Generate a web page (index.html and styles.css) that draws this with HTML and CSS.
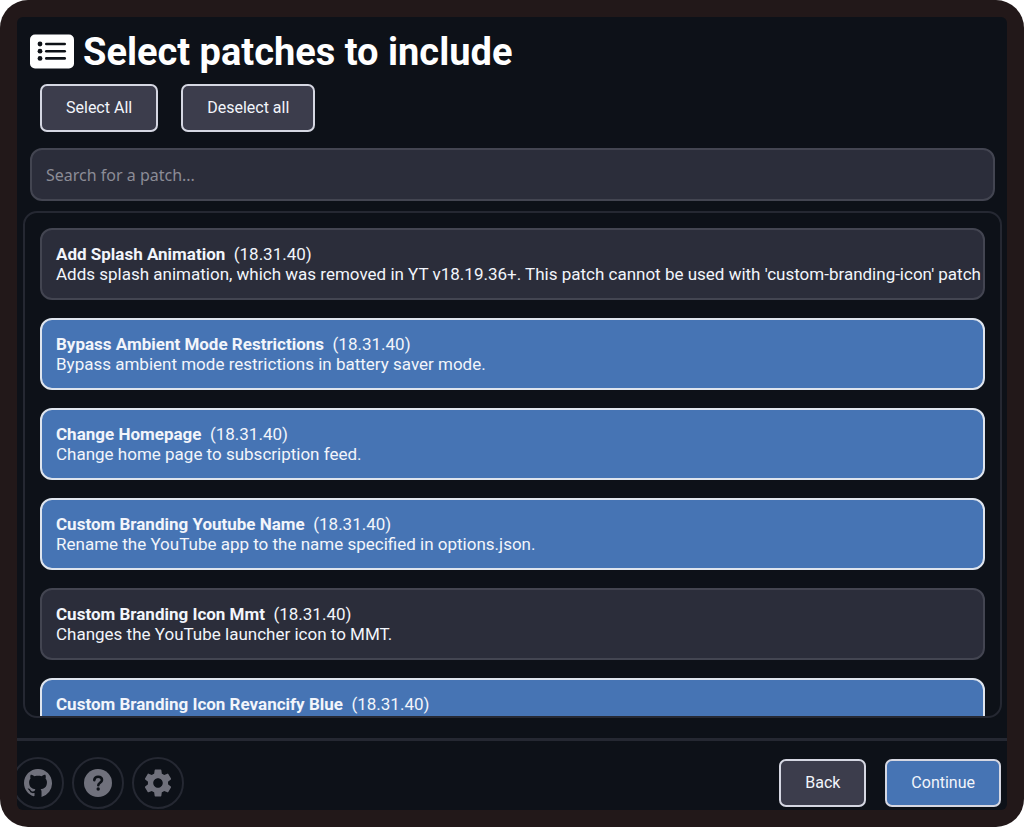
FILE: index.html
```html
<!DOCTYPE html>
<html lang="en">
  <head>
    <meta charset="utf-8">
    <title>Select patches</title>
    <link rel="stylesheet" href="styles.css">
  </head>
  <body>
    <div class="window">
      <div class="screen">
        <main class="content">
          <h1 class="title">
            <svg class="title-icon" viewBox="0 0 44 36" aria-hidden="true">
              <rect x="0" y="0.5" width="44" height="34" rx="5" fill="#fff"/>
              <g fill="#0d1117">
                <circle cx="10" cy="10" r="2.4"/>
                <circle cx="10" cy="17.2" r="2.4"/>
                <circle cx="10" cy="24.4" r="2.4"/>
                <rect x="15" y="8.7" width="21" height="2.6" rx="1.3"/>
                <rect x="15" y="15.9" width="21" height="2.6" rx="1.3"/>
                <rect x="15" y="23.1" width="21" height="2.6" rx="1.3"/>
              </g>
            </svg>
            Select patches to include
          </h1>

          <div class="select-buttons">
            <button type="button">Select All</button>
            <button type="button">Deselect all</button>
          </div>

          <input class="search" type="search" placeholder="Search for a patch..." aria-label="Search for a patch">

          <ul class="patch-list">
            <li>
              <input class="select" type="checkbox" id="patch-0">
              <label class="patch" for="patch-0">
                <span><strong>Add Splash Animation</strong>&nbsp; (18.31.40)</span>
                <span>Adds splash animation, which was removed in YT v18.19.36+. This patch cannot be used with 'custom-branding-icon' patch</span>
              </label>
            </li>
            <li>
              <input class="select" type="checkbox" id="patch-1" checked>
              <label class="patch" for="patch-1">
                <span><strong>Bypass Ambient Mode Restrictions</strong>&nbsp; (18.31.40)</span>
                <span>Bypass ambient mode restrictions in battery saver mode.</span>
              </label>
            </li>
            <li>
              <input class="select" type="checkbox" id="patch-2" checked>
              <label class="patch" for="patch-2">
                <span><strong>Change Homepage</strong>&nbsp; (18.31.40)</span>
                <span>Change home page to subscription feed.</span>
              </label>
            </li>
            <li>
              <input class="select" type="checkbox" id="patch-3" checked>
              <label class="patch" for="patch-3">
                <span><strong>Custom Branding Youtube Name</strong>&nbsp; (18.31.40)</span>
                <span>Rename the YouTube app to the name specified in options.json.</span>
              </label>
            </li>
            <li>
              <input class="select" type="checkbox" id="patch-4">
              <label class="patch" for="patch-4">
                <span><strong>Custom Branding Icon Mmt</strong>&nbsp; (18.31.40)</span>
                <span>Changes the YouTube launcher icon to MMT.</span>
              </label>
            </li>
            <li>
              <input class="select" type="checkbox" id="patch-5" checked>
              <label class="patch" for="patch-5">
                <span><strong>Custom Branding Icon Revancify Blue</strong>&nbsp; (18.31.40)</span>
              </label>
            </li>
          </ul>
        </main>

        <footer class="footer">
          <div class="links">
            <a class="round" href="#" aria-label="GitHub">
              <svg viewBox="0 0 16 16" fill="currentColor"><path d="M8 0C3.58 0 0 3.58 0 8c0 3.54 2.29 6.53 5.47 7.59.4.07.55-.17.55-.38 0-.19-.01-.82-.01-1.49-2.01.37-2.53-.49-2.69-.94-.09-.23-.48-.94-.82-1.13-.28-.15-.68-.52-.01-.53.63-.01 1.08.58 1.23.82.72 1.21 1.87.87 2.33.66.07-.52.28-.87.51-1.07-1.78-.2-3.64-.89-3.64-3.95 0-.87.31-1.59.82-2.15-.08-.2-.36-1.02.08-2.12 0 0 .67-.21 2.2.82.64-.18 1.32-.27 2-.27s1.36.09 2 .27c1.53-1.04 2.2-.82 2.2-.82.44 1.1.16 1.92.08 2.12.51.56.82 1.27.82 2.15 0 3.07-1.87 3.75-3.65 3.95.29.25.54.73.54 1.48V16A8.01 8.01 0 0 0 16 8c0-4.42-3.58-8-8-8z"/></svg>
            </a>
            <a class="round" href="#" aria-label="Help">
              <svg viewBox="0 0 28 28">
                <circle cx="14" cy="14" r="14" fill="currentColor"/>
                <path d="M10.3 11.2c.2-2.2 1.7-3.4 3.8-3.4 2.3 0 3.9 1.3 3.9 3.2 0 2.7-3.7 2.8-3.7 5.2" fill="none" stroke="#0d1117" stroke-width="2.6" stroke-linecap="round"/>
                <circle cx="14.2" cy="20" r="1.7" fill="#0d1117"/>
              </svg>
            </a>
            <a class="round" href="#" aria-label="Settings">
              <svg viewBox="2 2 20 20" fill="currentColor"><path d="M19.14 12.94c.04-.3.06-.61.06-.94 0-.32-.02-.64-.07-.94l2.03-1.58a.49.49 0 0 0 .12-.61l-1.92-3.32a.488.488 0 0 0-.59-.22l-2.39.96c-.5-.38-1.03-.7-1.62-.94l-.36-2.54a.484.484 0 0 0-.48-.41h-3.84c-.24 0-.43.17-.47.41l-.36 2.54c-.59.24-1.13.57-1.62.94l-2.39-.96c-.22-.08-.47 0-.59.22L2.74 8.87c-.12.21-.08.47.12.61l2.03 1.58c-.05.3-.09.63-.09.94s.02.64.07.94l-2.03 1.58a.49.49 0 0 0-.12.61l1.92 3.32c.12.22.37.29.59.22l2.39-.96c.5.38 1.03.7 1.62.94l.36 2.54c.05.24.24.41.48.41h3.84c.24 0 .44-.17.47-.41l.36-2.54c.59-.24 1.13-.56 1.62-.94l2.39.96c.22.08.47 0 .59-.22l1.92-3.32c.12-.22.07-.47-.12-.61l-2.01-1.58zM12 15.4c-1.87 0-3.4-1.53-3.4-3.4s1.53-3.4 3.4-3.4 3.4 1.53 3.4 3.4-1.53 3.4-3.4 3.4z"/></svg>
            </a>
          </div>
          <div class="nav-buttons">
            <button type="button">Back</button>
            <button class="highlighted" type="button">Continue</button>
          </div>
        </footer>
      </div>
    </div>
  </body>
</html>
```
FILE: styles.css
```css
* { box-sizing: border-box; }

body {
  margin: 0;
  background: #fff;
  color: #f2f5fb;
  font-family: Roboto, "Liberation Sans", sans-serif;
  font-size: 16px;
  line-height: 20px;
}

.window {
  height: 100vh;
  padding: 17px;
  border-radius: 28px;
  background: #221819;
}

.screen {
  display: flex;
  flex-direction: column;
  height: 100%;
  overflow: hidden;
  border-radius: 6px;
  background: #0d1118;
}

.content {
  display: flex;
  flex-direction: column;
  flex: 1;
  min-height: 0;
  padding: 12px 5px 20px 6px;
}

.title {
  display: flex;
  align-items: center;
  gap: 9px;
  margin: 0 7px;
  color: #fff;
  font-size: 38px;
  line-height: 46px;
}
.title-icon { width: 44px; height: 36px; }

button {
  height: 48px;
  padding: 0 24px;
  border: 2px solid #d5d7e2;
  border-radius: 7px;
  background: #3c3d4c;
  color: #f2f5fb;
  font: inherit;
  cursor: pointer;
}
button.highlighted { background: #4674b4; }

.select-buttons {
  display: flex;
  gap: 23px;
  margin: 9px 17px 16px;
}

.search {
  height: 53px;
  margin: 0 7px 10px;
  padding: 0 14px;
  border: 2px solid #434551;
  border-radius: 12px;
  background: #2b2d3a;
  color: #f2f5fb;
  font: 16px "Noto Sans", sans-serif;
  appearance: none;
}
.search::placeholder { color: #8b8c96; }

.patch-list {
  display: flex;
  flex-direction: column;
  flex: 1;
  gap: 18px;
  min-height: 0;
  margin: 0;
  padding: 15px;
  overflow-y: auto;
  scrollbar-width: none;
  border: 2px solid #252832;
  border-radius: 14px;
  font-size: 17px;
  list-style: none;
}
.patch-list li { position: relative; }

/* the whole card is the tick box */
.select {
  position: absolute;
  opacity: 0;
}
.patch {
  display: flex;
  flex-direction: column;
  min-height: 72px;
  padding: 14px 0 14px 14px;
  border: 2px solid #434551;
  border-radius: 12px;
  background: #2b2d3a;
  cursor: pointer;
}
.select:checked + .patch {
  border-color: #dfe5ee;
  background: #4674b4;
}

.footer {
  display: flex;
  align-items: center;
  justify-content: space-between;
  padding: 16px 6px 1px 0;
  border-top: 3px solid #252832;
}
.links {
  display: flex;
  gap: 8px;
  margin-left: -5px;
}
.round {
  display: flex;
  align-items: center;
  justify-content: center;
  width: 52px;
  height: 52px;
  border: 2px solid #252832;
  border-radius: 50%;
  color: #70717c;
}
.round svg { width: 28px; height: 28px; }
.nav-buttons { display: flex; gap: 19px; }
```
